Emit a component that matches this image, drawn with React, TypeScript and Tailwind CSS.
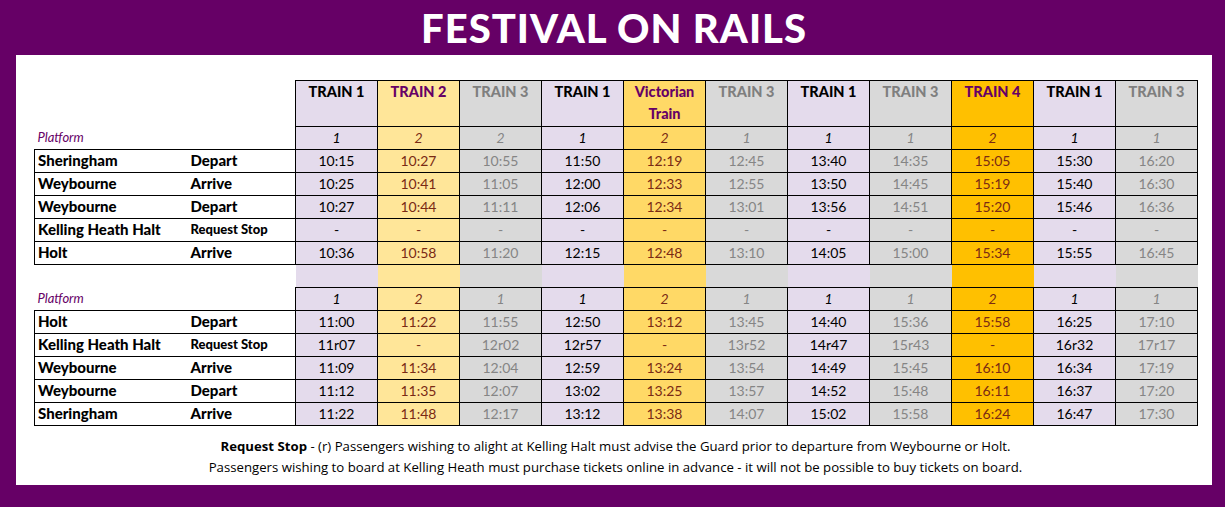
import React from "react";

type Col = {
  head: string[];
  bg: string;
  headText: string;
  cellText: string;
};

const LILAC = { bg: "bg-[#e4dbec]", headText: "text-black", cellText: "text-black" };
const GREY = { bg: "bg-[#d9d9d9]", headText: "text-[#7f7f7f]", cellText: "text-[#858585]" };

const cols: Col[] = [
  { head: ["TRAIN 1"], ...LILAC },
  { head: ["TRAIN 2"], bg: "bg-[#ffe699]", headText: "text-[#660066]", cellText: "text-[#7a2a14]" },
  { head: ["TRAIN 3"], ...GREY },
  { head: ["TRAIN 1"], ...LILAC },
  { head: ["Victorian", "Train"], bg: "bg-[#ffd966]", headText: "text-[#660066]", cellText: "text-[#7a2a14]" },
  { head: ["TRAIN 3"], ...GREY },
  { head: ["TRAIN 1"], ...LILAC },
  { head: ["TRAIN 3"], ...GREY },
  { head: ["TRAIN 4"], bg: "bg-[#ffc000]", headText: "text-[#660066]", cellText: "text-[#7a2a14]" },
  { head: ["TRAIN 1"], ...LILAC },
  { head: ["TRAIN 3"], ...GREY },
];

type Row = { station: string; kind: string; times: string[] };

const upPlatforms = ["1", "2", "2", "1", "2", "1", "1", "1", "2", "1", "1"];
const downPlatforms = ["1", "2", "1", "1", "2", "1", "1", "1", "2", "1", "1"];

const upRows: Row[] = [
  { station: "Sheringham", kind: "Depart", times: ["10:15", "10:27", "10:55", "11:50", "12:19", "12:45", "13:40", "14:35", "15:05", "15:30", "16:20"] },
  { station: "Weybourne", kind: "Arrive", times: ["10:25", "10:41", "11:05", "12:00", "12:33", "12:55", "13:50", "14:45", "15:19", "15:40", "16:30"] },
  { station: "Weybourne", kind: "Depart", times: ["10:27", "10:44", "11:11", "12:06", "12:34", "13:01", "13:56", "14:51", "15:20", "15:46", "16:36"] },
  { station: "Kelling Heath Halt", kind: "Request Stop", times: ["-", "-", "-", "-", "-", "-", "-", "-", "-", "-", "-"] },
  { station: "Holt", kind: "Arrive", times: ["10:36", "10:58", "11:20", "12:15", "12:48", "13:10", "14:05", "15:00", "15:34", "15:55", "16:45"] },
];

const downRows: Row[] = [
  { station: "Holt", kind: "Depart", times: ["11:00", "11:22", "11:55", "12:50", "13:12", "13:45", "14:40", "15:36", "15:58", "16:25", "17:10"] },
  { station: "Kelling Heath Halt", kind: "Request Stop", times: ["11r07", "-", "12r02", "12r57", "-", "13r52", "14r47", "15r43", "-", "16r32", "17r17"] },
  { station: "Weybourne", kind: "Arrive", times: ["11:09", "11:34", "12:04", "12:59", "13:24", "13:54", "14:49", "15:45", "16:10", "16:34", "17:19"] },
  { station: "Weybourne", kind: "Depart", times: ["11:12", "11:35", "12:07", "13:02", "13:25", "13:57", "14:52", "15:48", "16:11", "16:37", "17:20"] },
  { station: "Sheringham", kind: "Arrive", times: ["11:22", "11:48", "12:17", "13:12", "13:38", "14:07", "15:02", "15:58", "16:24", "16:47", "17:30"] },
];

const PlatformRow = ({ platforms }: { platforms: string[] }) => (
  <tr className="h-[23px]">
    <td colSpan={2} className="p-0 pb-[1px] pl-[3px] text-left text-[13px] italic text-[#660066]">Platform</td>
    {platforms.map((p, i) => (
      <td key={i} className={`border border-black p-0 pb-[1px] text-center text-[14px] italic ${cols[i].bg} ${cols[i].cellText}`}>
        {p}
      </td>
    ))}
  </tr>
);

const StationRows = ({ rows }: { rows: Row[] }) => (
  <>
    {rows.map((r, ri) => (
      <tr key={ri} className="h-[23px]">
        <td className="border-y border-l border-black p-0 pb-[1px] pl-[3px] text-left text-[15px] font-black text-black">{r.station}</td>
        <td className={`border-y border-black p-0 pb-[1px] text-left font-black text-black ${r.kind === "Request Stop" ? "text-[13px]" : "text-[15px]"}`}>
          {r.kind}
        </td>
        {r.times.map((t, i) => (
          <td key={i} className={`border border-black p-0 pb-[1px] text-center text-[14px] ${cols[i].bg} ${cols[i].cellText}`}>
            {t}
          </td>
        ))}
      </tr>
    ))}
  </>
);

export default function App() {
  return (
    <div className="flex h-[507px] w-[1230px] bg-white" style={{ fontFamily: "Lato, 'Noto Sans', sans-serif" }}>
      <div className="flex h-[507px] w-[1225px] flex-col bg-[#660066] pb-[22px] pl-[16px] pr-[13px]">
        <div className="flex h-[55px] items-center justify-center pt-[1px] text-[40px] font-black tracking-[0.025em] text-white">
          FESTIVAL ON RAILS
        </div>
        <div className="flex-1 bg-white pl-[18px] pt-[25px]">
          <table className="table-fixed border-collapse leading-none">
            <colgroup>
              <col className="w-[156px]" />
              <col className="w-[105px]" />
              {cols.map((_, i) => (
                <col key={i} className="w-[82px]" />
              ))}
            </colgroup>
            <tbody>
              <tr className="h-[46px]">
                <td colSpan={2} className="p-0" />
                {cols.map((c, i) => (
                  <td key={i} className={`border border-black p-0 align-top text-center text-[14.5px] font-black leading-[22px] ${c.bg} ${c.headText}`}>
                    {c.head.map((h, j) => (
                      <div key={j}>{h}</div>
                    ))}
                  </td>
                ))}
              </tr>
              <PlatformRow platforms={upPlatforms} />
              <StationRows rows={upRows} />
              <tr className="h-[23px]">
                <td colSpan={2} className="p-0" />
                {cols.map((c, i) => (
                  <td key={i} className={`p-0 ${c.bg}`} />
                ))}
              </tr>
              <PlatformRow platforms={downPlatforms} />
              <StationRows rows={downRows} />
            </tbody>
          </table>
          <div
            className="mt-[10px] w-[1163px] text-center text-[13.2px] leading-[21px] text-black"
            style={{ fontFamily: "'Open Sans', 'Liberation Sans', sans-serif" }}
          >
            <div>
              <span className="font-bold">Request Stop</span> - (r) Passengers wishing to alight at Kelling Halt must advise the Guard prior to departure from Weybourne or Holt.
            </div>
            <div>Passengers wishing to board at Kelling Heath must purchase tickets online in advance - it will not be possible to buy tickets on board.</div>
          </div>
        </div>
      </div>
    </div>
  );
}
